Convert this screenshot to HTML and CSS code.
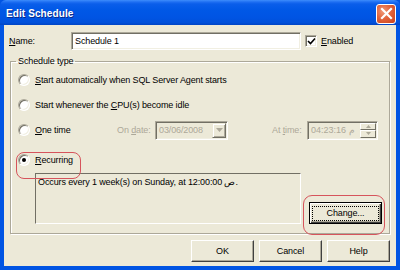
FILE: index.html
```html
<!DOCTYPE html>
<html>
<head>
<meta charset="utf-8">
<link rel="stylesheet" href="styles.css">
</head>
<body>
<div class="window">
  <div class="titlebar">
    <span class="title">Edit Schedule</span>
    <span class="close"><svg width="13" height="13" viewBox="0 0 13 13"><path d="M2 2 L11 11 M11 2 L2 11" stroke="#fff" stroke-width="2.2" stroke-linecap="square"/></svg></span>
  </div>
  <div class="frame">
    <div class="client">
      <div class="name-row">
        <span class="label-name"><u>N</u>ame:</span>
        <span class="field name-field">Schedule 1</span>
        <span class="check"><svg width="9" height="9" viewBox="0 0 9 9"><path d="M1 4 L3.5 6.5 L8 1.5" stroke="#000" stroke-width="1.6" fill="none"/></svg></span>
        <span class="check-label"><u>E</u>nabled</span>
      </div>
      <fieldset class="group">
        <legend>Schedule type</legend>
        <div class="row r1"><span class="radio"></span><span><u>S</u>tart automatically when SQL Server Agent starts</span></div>
        <div class="row r2"><span class="radio"></span><span>Start whenever the <u>C</u>PU(s) become idle</span></div>
        <div class="row r3">
          <span class="radio"></span><span class="once"><u>O</u>ne time</span>
          <span class="dis lbl-date">On <u>d</u>ate:</span>
          <span class="field dfield date-field"><span>03/06/2008</span><span class="drop"><svg width="7" height="4" viewBox="0 0 7 4"><path d="M0 0 H7 L3.5 4 Z" fill="#aca899"/></svg></span></span>
          <span class="dis lbl-time">At <u>t</u>ime:</span>
          <span class="field dfield time-field"><span>04:23:16 م</span><span class="spin"><span class="sb"><svg width="5" height="3" viewBox="0 0 5 3"><path d="M0 3 H5 L2.5 0 Z" fill="#aca899"/></svg></span><span class="sb"><svg width="5" height="3" viewBox="0 0 5 3"><path d="M0 0 H5 L2.5 3 Z" fill="#aca899"/></svg></span></span></span>
        </div>
        <div class="row r4"><span class="radio on"></span><span><u>R</u>ecurring</span></div>
        <div class="bottom">
          <div class="desc">Occurs every 1 week(s) on Sunday, at 12:00:00 ص.</div>
          <div class="btn default"><span class="focus">Chan<u>g</u>e...</span></div>
        </div>
        <span class="mark mark-rec"></span>
        <span class="mark mark-chg"></span>
      </fieldset>
      <div class="buttons">
        <div class="btn">OK</div>
        <div class="btn">Cancel</div>
        <div class="btn">Help</div>
      </div>
    </div>
  </div>
</div>
</body>
</html>
```

FILE: styles.css
```css
* { box-sizing: border-box; }
html, body { margin: 0; padding: 0; }
body { width: 400px; height: 270px; overflow: hidden; font-family: "Liberation Sans", Arial, sans-serif; font-size: 9px; letter-spacing: -0.12px; color: #000; }
.window { width: 400px; height: 270px; display: flex; flex-direction: column; background: #0054e3; }
.titlebar { height: 25px; flex: none; display: flex; align-items: center; justify-content: space-between; padding: 2px 4px 0 6px;
  background: linear-gradient(to bottom, #3d8dfc 0, #1e6ff2 2px, #0a5eea 4px, #0058e6 40%, #0054e3 70%, #0050da 90%, #0044c4 100%);
  border-radius: 6px 6px 0 0; }
.title { color: #fff; font-weight: bold; font-size: 10px; text-shadow: 1px 1px 0 #0a2a8a; letter-spacing: 0.1px; }
.close { width: 20px; height: 20px; border: 1px solid #fff; border-radius: 3px; display: flex; align-items: center; justify-content: center;
  background: radial-gradient(circle at 35% 35%, #f09a7a 0, #e2643c 45%, #c6401a 100%); }
.frame { flex: 1; padding: 0 4px 4px 4px; display: flex; }
.client { flex: 1; background: #ece9d8; padding: 0 6px; display: flex; flex-direction: column; position: relative; }
u { text-decoration: underline; text-underline-offset: 1px; }

.name-row { margin-top: 7px; height: 18px; display: flex; align-items: center; }
.label-name { width: 62px; margin-left: -1px; }
.field { background: #fff; border-style: solid; border-width: 1px; border-color: #aca899 #fff #fff #aca899;
  box-shadow: inset 1px 1px 0 #716f64, inset -1px -1px 0 #f1efe2; }
.name-field { width: 230px; height: 18px; padding: 2px 3px; line-height: 12px; }
.check { width: 12px; height: 12px; margin-left: 4px; background: #fff; border: 1px solid; border-color: #aca899 #fff #fff #aca899;
  box-shadow: inset 1px 1px 0 #716f64, inset -1px -1px 0 #f1efe2; display: flex; align-items: center; justify-content: center; }
.check-label { margin-left: 4px; }

.group { margin: 5px 0 0 0; padding: 1px 0 0 0; border: 1px solid #aca899; box-shadow: inset 1px 1px 0 #fff, 1px 1px 0 #fff; min-width: 0; position: relative; height: 179px; }
.group legend { padding: 0 2px; margin-left: 5px; line-height: 12px; }
.row { display: flex; align-items: center; padding-left: 7px; }
.r1 { height: 24px; }
.r2 { height: 25px; }
.r3 { height: 26px; }
.r4 { height: 20px; margin-top: 7px; }
.radio { width: 12px; height: 12px; border-radius: 50%; background: #fff; margin-right: 5px; flex: none; position: relative;
  border: 1px solid; border-color: #aca899 #fff #fff #aca899; box-shadow: inset 1px 1px 0 #716f64, inset -1px -1px 0 #f1efe2; }
.radio.on::after { content: ""; position: absolute; left: 3px; top: 3px; width: 4px; height: 4px; border-radius: 50%; background: #000; }
.once { width: 82px; }
.dis { color: #aca899; }
.lbl-date { width: 38px; }
.dfield { height: 19px; display: flex; align-items: center; justify-content: space-between; padding: 0 1px 0 3px; color: #aca899; background: #ece9d8; }
.date-field { width: 73px; }
.drop { width: 14px; height: 15px; background: #ece9d8; border: 1px solid; border-color: #ece9d8 #716f64 #716f64 #ece9d8; box-shadow: inset 1px 1px 0 #fff, inset -1px -1px 0 #aca899; display: flex; align-items: center; justify-content: center; }
.lbl-time { margin-left: 44px; width: 35px; }
.time-field { width: 71px; }
.spin { display: flex; flex-direction: column; width: 16px; height: 15px; }
.sb { flex: 1; background: #ece9d8; border: 1px solid; border-color: #fff #716f64 #716f64 #fff; display: flex; align-items: center; justify-content: center; }

.bottom { display: flex; align-items: flex-end; padding-left: 24px; margin-top: 3px; }
.desc { width: 266px; height: 51px; padding: 2px 2px; border: 1px solid; border-color: #716f64 #fff #fff #716f64; line-height: 12px; }
.btn { height: 22px; display: flex; align-items: center; justify-content: center; background: #ece9d8;
  border: 1px solid; border-color: #fff #404040 #404040 #fff; box-shadow: inset -1px -1px 0 #aca899; }
.btn.default { width: 73px; margin-left: 8px; border: 1px solid #000; box-shadow: inset 1px 1px 0 #fff, inset -1px -1px 0 #404040, inset -2px -2px 0 #aca899; }
.focus { border: 1px dotted #000; padding: 1px 14px; line-height: 11px; }

.mark { position: absolute; border: 1px solid #d6545c; border-radius: 8px; pointer-events: none; }
.mark-rec { left: 5px; top: 85px; width: 65px; height: 27px; }
.mark-chg { left: 292px; top: 128px; width: 82px; height: 40px; border-radius: 9px; }

.buttons { display: flex; justify-content: flex-end; gap: 5px; margin-top: 6px; }
.buttons .btn { width: 63px; }
```
